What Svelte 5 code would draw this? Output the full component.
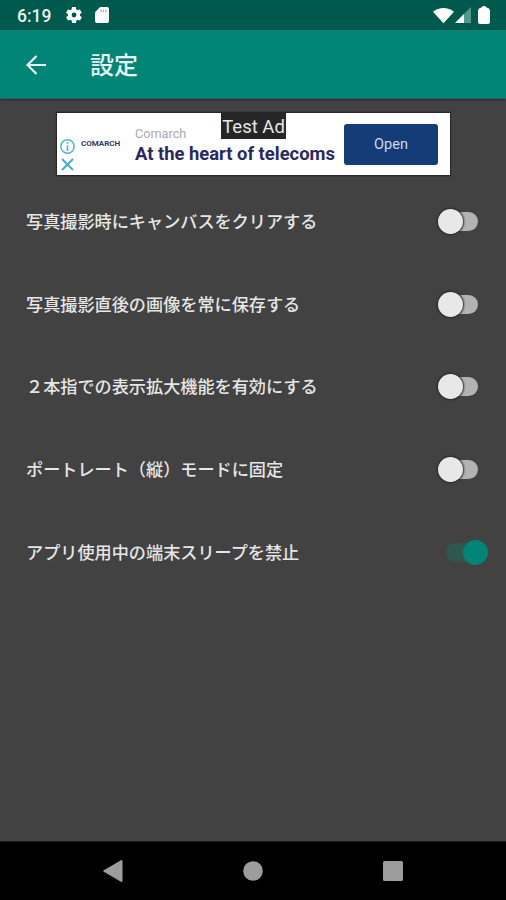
<script lang="ts">
	type Setting = {
		label: string;
		enabled: boolean;
	};

	let settings = $state<Setting[]>([
		{ label: '写真撮影時にキャンバスをクリアする', enabled: false },
		{ label: '写真撮影直後の画像を常に保存する', enabled: false },
		{ label: '２本指での表示拡大機能を有効にする', enabled: false },
		{ label: 'ポートレート（縦）モードに固定', enabled: false },
		{ label: 'アプリ使用中の端末スリープを禁止', enabled: true }
	]);
</script>

<div class="screen">
	<div class="status-bar">
		<span class="clock">6:19</span>
		<svg class="gear" width="16" height="16" viewBox="2 2 20 20" aria-hidden="true">
			<path
				fill="#fff"
				d="M19.4 13c0-.3.1-.6.1-1s0-.7-.1-1l2.1-1.6c.2-.2.2-.4.1-.6l-2-3.5c-.1-.2-.4-.3-.6-.2l-2.5 1c-.5-.4-1.1-.7-1.7-1l-.4-2.6c0-.3-.2-.5-.5-.5h-4c-.3 0-.5.2-.5.4l-.4 2.7c-.6.2-1.1.6-1.7 1l-2.5-1c-.2-.1-.5 0-.6.2l-2 3.500c-.1.2-.1.5.1.6L4.500 11c0 .3-.1.6-.1 1s0 .7.1 1l-2.1 1.600c-.2.2-.2.4-.1.6l2 3.500c.1.2.4.3.6.2l2.500-1c.5.4 1.100.7 1.700 1l.4 2.600c0 .3.2.5.5.5h4c.3 0 .5-.2.5-.4l.4-2.700c.6-.2 1.100-.6 1.700-1l2.500 1c.2.1.5 0 .6-.2l2-3.500c.1-.2.1-.5-.1-.6L19.400 13zM12 15a3 3 0 1 1 0-6 3 3 0 0 1 0 6z"
			/>
		</svg>
		<svg class="sd-card" width="14" height="16" viewBox="0 0 15 17" aria-hidden="true">
			<path fill="#fff" d="M5.5 0H13a2 2 0 0 1 2 2v13a2 2 0 0 1-2 2H2a2 2 0 0 1-2-2V5.5z" />
			<path stroke="#8fb5ae" stroke-width="1.2" d="M6.5 2.5v3M9 2.5v3M11.5 2.5v3" />
		</svg>
		<div class="indicators">
			<svg width="21" height="17" viewBox="0 0 22 17" aria-hidden="true">
				<path fill="#fff" d="M11 16.5 0 4.5C6.5-.6 15.5-.6 22 4.5z" />
			</svg>
			<svg width="16" height="16" viewBox="0 0 16 16" aria-hidden="true">
				<path fill="#54998d" d="M0 16 16 0v16z" />
				<path fill="#fff" d="M0 16 9 7v9z" />
			</svg>
			<svg width="12" height="18" viewBox="0 0 12 18" aria-hidden="true">
				<path fill="#fff" d="M3.5 1.5Q3.5 0 6 0t2.5 1.5Q12 2 12 5v11a2 2 0 0 1-2 2H2a2 2 0 0 1-2-2V5q0-3 3.5-3.5z" />
			</svg>
		</div>
	</div>

	<header class="app-bar">
		<button class="back" aria-label="戻る">
			<svg width="20" height="20" viewBox="0 0 20 20" aria-hidden="true">
				<path fill="none" stroke="#e9f4f2" stroke-width="2.2" d="M20 10H1.5M10.500 1 1.500 10l9 9" />
			</svg>
		</button>
		<h1>設定</h1>
	</header>

	<main>
		<div class="ad">
			<div class="ad-marks">
				<svg width="15" height="15" viewBox="0 0 15 15" aria-hidden="true">
					<circle cx="7.5" cy="7.5" r="6.7" fill="none" stroke="#55b4d4" stroke-width="1.5" />
					<path stroke="#55b4d4" stroke-width="1.7" d="M7.5 6.2V12M7.5 3v1.800" />
				</svg>
				<svg width="13" height="13" viewBox="0 0 13 13" aria-hidden="true">
					<path stroke="#45add0" stroke-width="2" d="m1 1 11 11M12 1 1 12" />
				</svg>
			</div>
			<span class="ad-logo">COMARCH</span>
			<div class="ad-copy">
				<span class="advertiser">Comarch</span>
				<span class="headline">At the heart of telecoms</span>
			</div>
			<button class="ad-open">Open</button>
			<span class="test-label">Test Ad</span>
		</div>

		<ul class="settings">
			{#each settings as setting (setting.label)}
				<li>
					<span class="label">{setting.label}</span>
					<button
						class="switch"
						class:on={setting.enabled}
						role="switch"
						aria-checked={setting.enabled}
						aria-label={setting.label}
						onclick={() => (setting.enabled = !setting.enabled)}
					>
						<span class="thumb"></span>
					</button>
				</li>
			{/each}
		</ul>
	</main>

	<nav class="nav-bar">
		<svg width="20" height="24" viewBox="0 0 20 24" aria-hidden="true">
			<path fill="#9d9d9d" d="M.8 11.3 18 1.2q1.500-.7 1.500 1v19.600q0 1.700-1.500 1L.8 12.700q-1-.7 0-1.400z" />
		</svg>
		<svg width="20" height="20" viewBox="0 0 20 20" aria-hidden="true">
			<circle cx="10" cy="10" r="9.8" fill="#9d9d9d" />
		</svg>
		<svg width="20" height="20" viewBox="0 0 20 20" aria-hidden="true">
			<rect width="20" height="20" rx="1.5" fill="#9d9d9d" />
		</svg>
	</nav>
</div>

<style>
	:global(body) {
		margin: 0;
		background: #424242;
	}

	button {
		border: 0;
		padding: 0;
		background: none;
		font: inherit;
	}

	.screen {
		display: flex;
		flex-direction: column;
		width: 506px;
		height: 900px;
		overflow: hidden;
		background: #424242;
		color: #e6e6e6;
		font-family: Roboto, 'Noto Sans CJK JP', sans-serif;
	}

	.status-bar {
		display: flex;
		align-items: center;
		box-sizing: border-box;
		height: 30px;
		padding: 0 16px 0 17px;
		background: #00594d;
	}

	.clock {
		width: 49px;
		color: #e8f1ef;
		font-size: 17.5px;
		font-weight: 500;
		line-height: 30px;
		padding-top: 2px;
	}

	.sd-card {
		margin-left: 13px;
	}

	.indicators {
		display: flex;
		align-items: center;
		gap: 1px;
		margin-left: auto;
	}

	.indicators svg:last-child {
		margin-left: 6px;
	}

	.app-bar {
		display: flex;
		align-items: center;
		box-sizing: border-box;
		height: 69px;
		padding-left: 26px;
		background: #008577;
		border-bottom: 1px solid #17695f;
		box-shadow: 0 1px 2px #2b2b2b;
	}

	.back {
		display: flex;
		width: 64px;
		padding-top: 1px;
	}

	h1 {
		margin: 0;
		padding-top: 4px;
		color: #e9f4f2;
		font-size: 24px;
		font-weight: 500;
		line-height: 36px;
	}

	main {
		flex: 1;
		padding-top: 14px;
	}

	.ad {
		position: relative;
		display: flex;
		align-items: center;
		box-sizing: border-box;
		width: 393px;
		height: 62px;
		margin-left: 57px;
		padding: 0 12px 0 3px;
		background: #fff;
		box-shadow: 0 0 1px 1px #262626;
	}

	.ad-marks {
		display: flex;
		flex-direction: column;
		align-items: center;
		gap: 4px;
		width: 15px;
		padding-top: 22px;
	}

	.ad-logo {
		width: 55px;
		padding-left: 6px;
		box-sizing: border-box;
		color: #35356b;
		font-size: 8px;
		font-weight: 700;
		line-height: 10px;
	}

	.ad-copy {
		display: flex;
		flex-direction: column;
		flex: 1;
		padding: 2px 0 0 5px;
		white-space: nowrap;
	}

	.advertiser {
		color: #aaaab8;
		font-size: 12.7px;
		line-height: 17px;
	}

	.headline {
		color: #29295f;
		font-size: 18.4px;
		font-weight: 700;
		line-height: 23px;
	}

	.ad-open {
		flex: none;
		width: 94px;
		height: 41px;
		border-radius: 3px;
		background: #143c76;
		color: #ced8e8;
		font-size: 14.5px;
	}

	.test-label {
		position: absolute;
		top: 0;
		left: 164px;
		width: 65px;
		height: 26px;
		background: #262626;
		color: #e8e8e8;
		font-size: 18.5px;
		line-height: 28px;
		text-align: center;
		white-space: nowrap;
	}

	.settings {
		margin: 0;
		padding: 5px 0 0;
		list-style: none;
	}

	.settings li {
		display: flex;
		align-items: center;
		justify-content: space-between;
		box-sizing: border-box;
		height: 82.75px;
		padding: 0 18px 0 26px;
	}

	.label {
		padding-top: 1px;
		font-size: 17.15px;
		font-weight: 500;
		line-height: 26px;
	}

	.switch {
		display: flex;
		align-items: center;
		width: 32px;
		height: 19px;
		margin-right: 10px;
		border-radius: 10px;
		background: #b3b3b3;
	}

	.thumb {
		flex: none;
		width: 25px;
		height: 25px;
		margin-left: -8px;
		border-radius: 50%;
		background: #e8e8e8;
		box-shadow: 0 0 2px 1px #292929;
	}

	.switch.on {
		background: #2f574f;
	}

	.switch.on .thumb {
		margin-left: 17px;
		background: #008577;
		box-shadow: none;
	}

	.nav-bar {
		display: flex;
		align-items: center;
		justify-content: space-between;
		box-sizing: border-box;
		height: 59px;
		padding: 0 103px 0 103px;
		background: #000;
		border-top: 1px solid #1c1c1c;
	}
</style>
